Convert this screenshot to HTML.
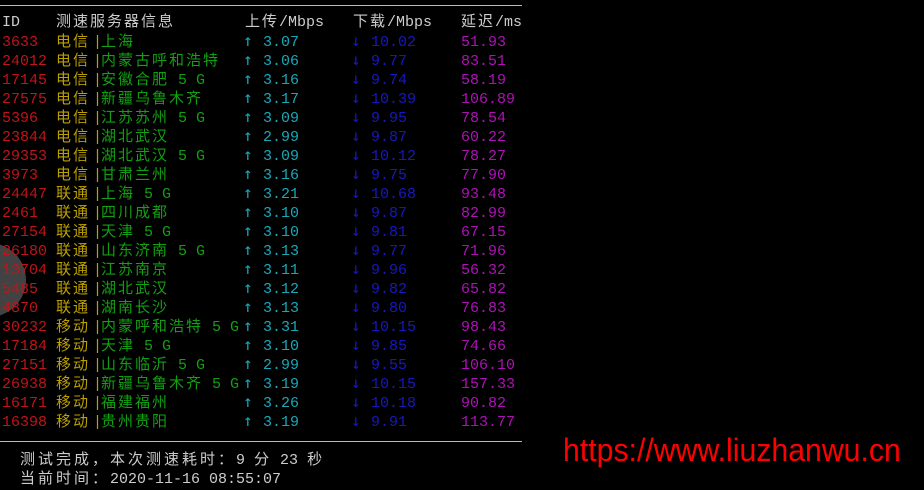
<!DOCTYPE html><html><head><meta charset="utf-8"><style>
body{margin:0;width:924px;height:490px;background:#000;overflow:hidden;position:relative;font-family:"Liberation Mono","Noto Sans CJK SC",monospace;font-size:15px;}
.r{position:absolute;left:0;height:19px;line-height:19px;white-space:pre}
.r span{position:absolute;top:0}
.c{letter-spacing:2px}
.id{left:2px;color:#c01418}.ca{left:56px;color:#bca000}.bar{left:93px;color:#bca000}.lo{left:101px;color:#12a012}
.r .ua{left:243px;top:-2px;color:#19a8b8;font-family:"DejaVu Sans Mono",monospace;font-size:16px}.un{left:263px;color:#19a8b8}.r .da{left:351px;top:-2px;color:#1818c0;font-family:"DejaVu Sans Mono",monospace;font-size:16px}.dn{left:371px;color:#1818c0}.la{left:461px;color:#b010b8}
.h{color:#ccc}
.line{position:absolute;left:0;height:1px;background:#bbb}
</style></head><body>
<div class="line" style="top:5px;width:522px"></div>
<div style="position:absolute;left:-48px;top:243px;width:74px;height:74px;border-radius:50%;background:rgba(120,120,120,0.55)"></div>
<div class="r" style="top:13px"><span class="h" style="left:2px">ID</span><span class="h c" style="left:56px">测速服务器信息</span><span class="h" style="left:245px"><span class="c" style="position:static">上传</span>/Mbps</span><span class="h" style="left:353px"><span class="c" style="position:static">下载</span>/Mbps</span><span class="h" style="left:461px"><span class="c" style="position:static">延迟</span>/ms</span></div>
<div class="r" style="top:33px"><span class="id">3633</span><span class="ca c">电信</span><span class="bar">|</span><span class="lo c">上海</span><span class="ua">↑</span><span class="un">3.07</span><span class="da">↓</span><span class="dn">10.02</span><span class="la">51.93</span></div>
<div class="r" style="top:52px"><span class="id">24012</span><span class="ca c">电信</span><span class="bar">|</span><span class="lo c">内蒙古呼和浩特</span><span class="ua">↑</span><span class="un">3.06</span><span class="da">↓</span><span class="dn">9.77</span><span class="la">83.51</span></div>
<div class="r" style="top:71px"><span class="id">17145</span><span class="ca c">电信</span><span class="bar">|</span><span class="lo"><span class="c" style="position:static">安徽合肥</span> 5 G</span><span class="ua">↑</span><span class="un">3.16</span><span class="da">↓</span><span class="dn">9.74</span><span class="la">58.19</span></div>
<div class="r" style="top:90px"><span class="id">27575</span><span class="ca c">电信</span><span class="bar">|</span><span class="lo c">新疆乌鲁木齐</span><span class="ua">↑</span><span class="un">3.17</span><span class="da">↓</span><span class="dn">10.39</span><span class="la">106.89</span></div>
<div class="r" style="top:109px"><span class="id">5396</span><span class="ca c">电信</span><span class="bar">|</span><span class="lo"><span class="c" style="position:static">江苏苏州</span> 5 G</span><span class="ua">↑</span><span class="un">3.09</span><span class="da">↓</span><span class="dn">9.95</span><span class="la">78.54</span></div>
<div class="r" style="top:128px"><span class="id">23844</span><span class="ca c">电信</span><span class="bar">|</span><span class="lo c">湖北武汉</span><span class="ua">↑</span><span class="un">2.99</span><span class="da">↓</span><span class="dn">9.87</span><span class="la">60.22</span></div>
<div class="r" style="top:147px"><span class="id">29353</span><span class="ca c">电信</span><span class="bar">|</span><span class="lo"><span class="c" style="position:static">湖北武汉</span> 5 G</span><span class="ua">↑</span><span class="un">3.09</span><span class="da">↓</span><span class="dn">10.12</span><span class="la">78.27</span></div>
<div class="r" style="top:166px"><span class="id">3973</span><span class="ca c">电信</span><span class="bar">|</span><span class="lo c">甘肃兰州</span><span class="ua">↑</span><span class="un">3.16</span><span class="da">↓</span><span class="dn">9.75</span><span class="la">77.90</span></div>
<div class="r" style="top:185px"><span class="id">24447</span><span class="ca c">联通</span><span class="bar">|</span><span class="lo"><span class="c" style="position:static">上海</span> 5 G</span><span class="ua">↑</span><span class="un">3.21</span><span class="da">↓</span><span class="dn">10.68</span><span class="la">93.48</span></div>
<div class="r" style="top:204px"><span class="id">2461</span><span class="ca c">联通</span><span class="bar">|</span><span class="lo c">四川成都</span><span class="ua">↑</span><span class="un">3.10</span><span class="da">↓</span><span class="dn">9.87</span><span class="la">82.99</span></div>
<div class="r" style="top:223px"><span class="id">27154</span><span class="ca c">联通</span><span class="bar">|</span><span class="lo"><span class="c" style="position:static">天津</span> 5 G</span><span class="ua">↑</span><span class="un">3.10</span><span class="da">↓</span><span class="dn">9.81</span><span class="la">67.15</span></div>
<div class="r" style="top:242px"><span class="id">26180</span><span class="ca c">联通</span><span class="bar">|</span><span class="lo"><span class="c" style="position:static">山东济南</span> 5 G</span><span class="ua">↑</span><span class="un">3.13</span><span class="da">↓</span><span class="dn">9.77</span><span class="la">71.96</span></div>
<div class="r" style="top:261px"><span class="id">13704</span><span class="ca c">联通</span><span class="bar">|</span><span class="lo c">江苏南京</span><span class="ua">↑</span><span class="un">3.11</span><span class="da">↓</span><span class="dn">9.96</span><span class="la">56.32</span></div>
<div class="r" style="top:280px"><span class="id">5485</span><span class="ca c">联通</span><span class="bar">|</span><span class="lo c">湖北武汉</span><span class="ua">↑</span><span class="un">3.12</span><span class="da">↓</span><span class="dn">9.82</span><span class="la">65.82</span></div>
<div class="r" style="top:299px"><span class="id">4870</span><span class="ca c">联通</span><span class="bar">|</span><span class="lo c">湖南长沙</span><span class="ua">↑</span><span class="un">3.13</span><span class="da">↓</span><span class="dn">9.80</span><span class="la">76.83</span></div>
<div class="r" style="top:318px"><span class="id">30232</span><span class="ca c">移动</span><span class="bar">|</span><span class="lo"><span class="c" style="position:static">内蒙呼和浩特</span> 5 G</span><span class="ua">↑</span><span class="un">3.31</span><span class="da">↓</span><span class="dn">10.15</span><span class="la">98.43</span></div>
<div class="r" style="top:337px"><span class="id">17184</span><span class="ca c">移动</span><span class="bar">|</span><span class="lo"><span class="c" style="position:static">天津</span> 5 G</span><span class="ua">↑</span><span class="un">3.10</span><span class="da">↓</span><span class="dn">9.85</span><span class="la">74.66</span></div>
<div class="r" style="top:356px"><span class="id">27151</span><span class="ca c">移动</span><span class="bar">|</span><span class="lo"><span class="c" style="position:static">山东临沂</span> 5 G</span><span class="ua">↑</span><span class="un">2.99</span><span class="da">↓</span><span class="dn">9.55</span><span class="la">106.10</span></div>
<div class="r" style="top:375px"><span class="id">26938</span><span class="ca c">移动</span><span class="bar">|</span><span class="lo"><span class="c" style="position:static">新疆乌鲁木齐</span> 5 G</span><span class="ua">↑</span><span class="un">3.19</span><span class="da">↓</span><span class="dn">10.15</span><span class="la">157.33</span></div>
<div class="r" style="top:394px"><span class="id">16171</span><span class="ca c">移动</span><span class="bar">|</span><span class="lo c">福建福州</span><span class="ua">↑</span><span class="un">3.26</span><span class="da">↓</span><span class="dn">10.18</span><span class="la">90.82</span></div>
<div class="r" style="top:413px"><span class="id">16398</span><span class="ca c">移动</span><span class="bar">|</span><span class="lo c">贵州贵阳</span><span class="ua">↑</span><span class="un">3.19</span><span class="da">↓</span><span class="dn">9.91</span><span class="la">113.77</span></div>
<div class="line" style="top:441px;width:522px"></div>
<div class="r h" style="top:451px;left:20px"><span class="c" style="position:static;letter-spacing:3px">测试完成，本次测速耗时：</span>9 <span class="c" style="position:static">分</span> 23 <span class="c" style="position:static">秒</span></div>
<div class="r h" style="top:470px;left:20px"><span class="c" style="position:static;letter-spacing:3px">当前时间：</span>2020-11-16 08:55:07</div>
<div style="position:absolute;left:563px;top:432px;color:#f00;font-family:'Liberation Sans',sans-serif;font-size:32px;line-height:36px;white-space:nowrap;transform-origin:0 0;transform:scaleX(0.945)">https://www.liuzhanwu.cn</div>
</body></html>
